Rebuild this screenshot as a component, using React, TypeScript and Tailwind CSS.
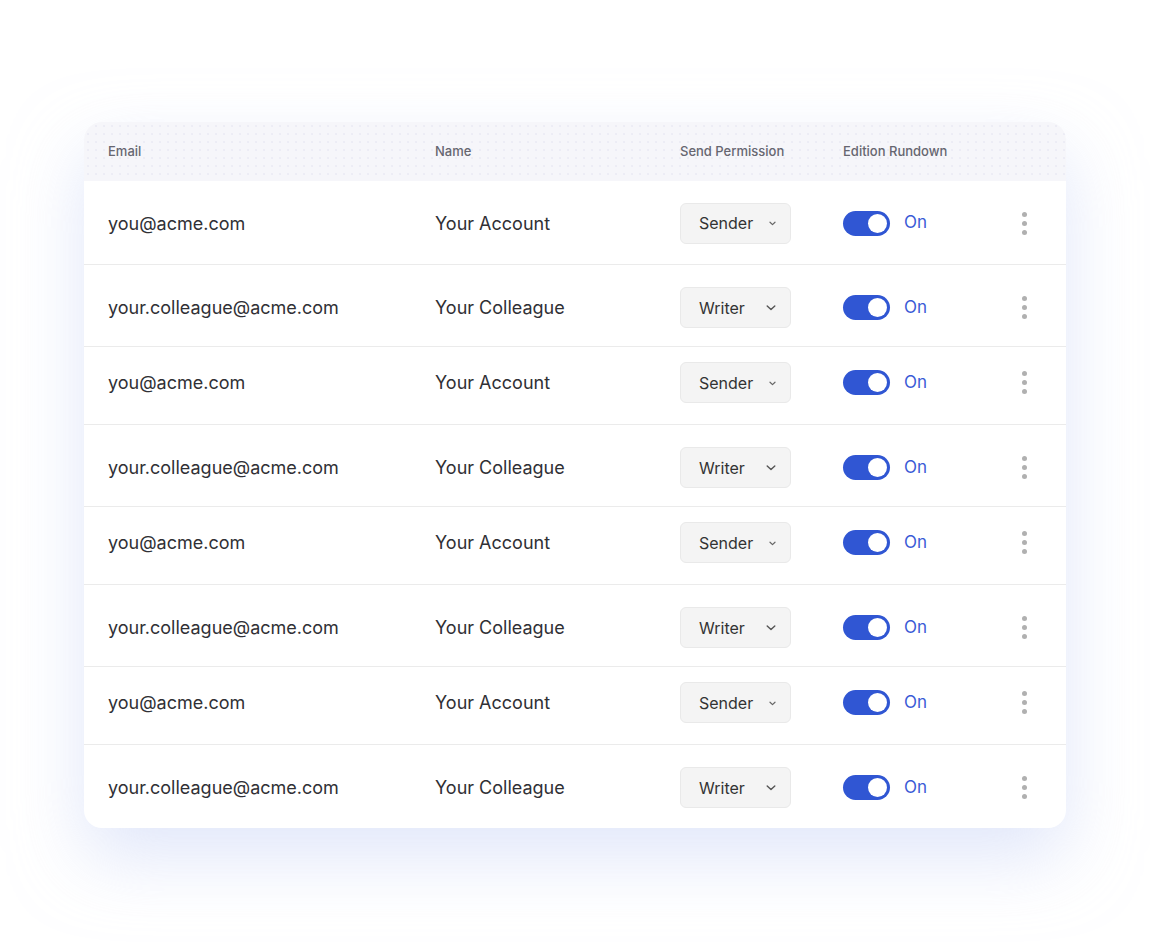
import React from "react";

type Row = { email: string; name: string; role: "Sender" | "Writer"; h: string; pad: string };

const rows: Row[] = [
  { email: "you@acme.com", name: "Your Account", role: "Sender", h: "h-[84px]", pad: "pt-[1px]" },
  { email: "your.colleague@acme.com", name: "Your Colleague", role: "Writer", h: "h-[82px]", pad: "pt-[4px]" },
  { email: "you@acme.com", name: "Your Account", role: "Sender", h: "h-[78px]", pad: "pb-[6px]" },
  { email: "your.colleague@acme.com", name: "Your Colleague", role: "Writer", h: "h-[82px]", pad: "pt-[4px]" },
  { email: "you@acme.com", name: "Your Account", role: "Sender", h: "h-[78px]", pad: "pb-[6px]" },
  { email: "your.colleague@acme.com", name: "Your Colleague", role: "Writer", h: "h-[82px]", pad: "pt-[4px]" },
  { email: "you@acme.com", name: "Your Account", role: "Sender", h: "h-[78px]", pad: "pb-[6px]" },
  { email: "your.colleague@acme.com", name: "Your Colleague", role: "Writer", h: "h-[83px]", pad: "pt-[2px]" },
];

function Chevron({ small }: { small: boolean }) {
  return small ? (
    <svg width="7" height="5" viewBox="0 0 7 5" className="mt-[1px]">
      <path d="M1 1.2 L3.5 3.6 L6 1.2" fill="none" stroke="#666" strokeWidth="1.2" strokeLinecap="round" strokeLinejoin="round" />
    </svg>
  ) : (
    <svg width="10" height="6" viewBox="0 0 10 6" className="mt-[1px]">
      <path d="M1.2 1 L5 4.6 L8.8 1" fill="none" stroke="#555" strokeWidth="1.4" strokeLinecap="round" strokeLinejoin="round" />
    </svg>
  );
}

export default function App() {
  return (
    <div
      className="min-h-[950px] w-[1150px] bg-white pt-[122px] pl-[84px]"
      style={{ fontFamily: "Inter, 'Noto Sans', sans-serif" }}
    >
      <div className="w-[982px] rounded-[18px] bg-white shadow-[0_30px_70px_0_rgba(200,212,245,0.55)] overflow-hidden">
        <div
          className="flex h-[59px] items-center bg-[#f6f6fa] text-[13px] font-medium text-[#666670]"
          style={{
            backgroundImage: "radial-gradient(circle, rgba(200,200,225,0.45) 0.6px, transparent 0.8px)",
            backgroundSize: "8px 8px",
          }}
        >
          <div className="w-[351px] pl-[24px]">Email</div>
          <div className="w-[245px]">Name</div>
          <div className="w-[163px]">Send Permission</div>
          <div>Edition Rundown</div>
        </div>
        {rows.map((r, i) => (
          <div
            key={i}
            className={`flex items-center ${r.h} ${r.pad} ${i < rows.length - 1 ? "border-b border-[#ebebeb]" : ""} text-[18px] text-[#303035]`}
          >
            <div className="w-[351px] pl-[24px]">{r.email}</div>
            <div className="w-[245px]">{r.name}</div>
            <div className="w-[163px]">
              <div className="flex h-[41px] w-[111px] items-center justify-between rounded-[6px] border border-[#e9e9e9] bg-[#f4f4f4] pl-[18px] pr-[14px] text-[16px] text-[#333]">
                <span>{r.role}</span>
                <Chevron small={r.role === "Sender"} />
              </div>
            </div>
            <div className="flex w-[170px] items-center gap-[14px]">
              <div className="flex h-[25px] w-[47px] items-center justify-end rounded-full bg-[#3056d3] pr-[3px]">
                <div className="h-[19px] w-[19px] rounded-full bg-white" />
              </div>
              <span className="text-[17px] text-[#3a5bd6]">On</span>
            </div>
            <div className="flex flex-col gap-[4px] pl-[9px]">
              <div className="h-[5px] w-[5px] rounded-full bg-[#b0b0b0]" />
              <div className="h-[5px] w-[5px] rounded-full bg-[#b0b0b0]" />
              <div className="h-[5px] w-[5px] rounded-full bg-[#b0b0b0]" />
            </div>
          </div>
        ))}
      </div>
    </div>
  );
}
